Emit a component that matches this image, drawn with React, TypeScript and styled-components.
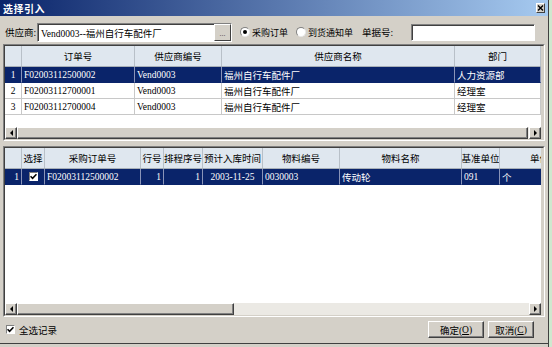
import React from 'react';
import styled, { createGlobalStyle } from 'styled-components';

const GlobalStyle = createGlobalStyle`
  html, body {
    margin: 0;
    padding: 0;
  }
  body {
    background: #cfe8cf;
    font-family: "Liberation Serif", "Noto Sans CJK SC", serif;
    font-size: 9.5px;
    color: #000;
  }
`;

const Window = styled.div`
  width: 549px;
  height: 347px;
  box-sizing: border-box;
  background: #d4d0c8;
  border-right: 1px solid #404040;
  display: flex;
  flex-direction: column;
`;

const TitleBar = styled.div`
  height: 16px;
  flex: none;
  background: linear-gradient(to right, #0a246a, #a6caf0);
  display: flex;
  align-items: center;
  justify-content: space-between;
  padding: 0 3px 0 3px;
`;

const Title = styled.span`
  color: #fff;
  font-weight: bold;
  font-size: 10px;
  font-family: "Noto Sans CJK SC", sans-serif;
  letter-spacing: 0.5px;
`;

const CloseButton = styled.div`
  width: 9px;
  height: 10px;
  box-sizing: border-box;
  background: #d4d0c8;
  border: 1px solid;
  border-color: #fff #404040 #404040 #fff;
  display: flex;
  align-items: center;
  justify-content: center;
`;

const Toolbar = styled.div`
  height: 28px;
  flex: none;
  box-sizing: border-box;
  padding: 4px 0 0 5px;
  display: flex;
  align-items: center;
`;

const Label = styled.span<{ $width: number }>`
  width: ${p => p.$width}px;
  flex: none;
  white-space: nowrap;
`;

const Sunken = styled.div<{ $width: number; $height: number }>`
  width: ${p => p.$width}px;
  height: ${p => p.$height}px;
  flex: none;
  box-sizing: border-box;
  background: #fff;
  border: 1px solid;
  border-color: #808080 #fff #fff #808080;
  display: flex;
  align-items: stretch;
  box-shadow: inset 1px 1px 0 #404040;
`;

const InputText = styled.span`
  flex: 1;
  padding: 2px 0 0 3px;
  white-space: nowrap;
  overflow: hidden;
`;

const EllipsisButton = styled.div`
  width: 17px;
  flex: none;
  box-sizing: border-box;
  background: #d4d0c8;
  border: 1px solid;
  border-color: #fff #404040 #404040 #fff;
  display: flex;
  align-items: flex-end;
  justify-content: center;
  padding-bottom: 2px;
  font-size: 8px;
  color: #404040;
  line-height: 1;
`;

const RadioOption = styled.label<{ $offset: number; $width: number }>`
  margin-left: ${p => p.$offset}px;
  width: ${p => p.$width}px;
  flex: none;
  display: flex;
  align-items: center;
  gap: 2px;
  white-space: nowrap;
  font-size: 9px;
`;

const Radio = styled.span<{ $checked?: boolean }>`
  width: 10px;
  height: 10px;
  flex: none;
  box-sizing: border-box;
  border-radius: 50%;
  background: #fff;
  border: 1px solid;
  border-color: #808080 #e8e8e8 #e8e8e8 #808080;
  display: inline-flex;
  align-items: center;
  justify-content: center;

  &::after {
    content: '';
    width: 4px;
    height: 4px;
    border-radius: 50%;
    background: ${p => (p.$checked ? '#000' : 'transparent')};
  }
`;

const DocLabel = styled.span`
  width: 49px;
  flex: none;
  white-space: nowrap;
`;

const GridPanel = styled.div<{ $height: number }>`
  height: ${p => p.$height}px;
  flex: none;
  margin: 0 3px;
  box-sizing: border-box;
  border: 1px solid;
  border-color: #808080 #fff #fff #808080;
  display: flex;
`;

const GridInner = styled.div`
  flex: 1;
  border: 1px solid;
  border-color: #404040 #d4d0c8 #d4d0c8 #404040;
  background: #d4d0c8;
  display: flex;
  flex-direction: column;
  min-height: 0;
`;

const GridBody = styled.div`
  width: 536px;
  flex: 1;
  background: #fff;
  overflow: hidden;
  display: flex;
  flex-direction: column;
`;

const HeaderRow = styled.div`
  height: 21px;
  flex: none;
  display: flex;
  background: #dfe7ef;
  border-bottom: 1px solid #a8b0b8;
  box-sizing: border-box;
`;

const HeaderCell = styled.div<{ $width: number }>`
  width: ${p => p.$width}px;
  flex: none;
  box-sizing: border-box;
  border-right: 1px solid #b8c0c8;
  display: flex;
  align-items: center;
  justify-content: center;
  white-space: nowrap;
  overflow: hidden;
`;

const Row = styled.div<{ $selected?: boolean }>`
  height: 16px;
  flex: none;
  display: flex;
  background: ${p => (p.$selected ? '#0a246a' : '#fff')};
  color: ${p => (p.$selected ? '#fff' : '#000')};
`;

const Cell = styled.div<{ $width: number; $align: string; $selected?: boolean }>`
  width: ${p => p.$width}px;
  flex: none;
  box-sizing: border-box;
  border-right: 1px solid ${p => (p.$selected ? '#8a94b8' : '#c8c8c8')};
  border-bottom: 1px solid ${p => (p.$selected ? '#0a246a' : '#c8c8c8')};
  padding: 0 2px;
  display: flex;
  align-items: center;
  justify-content: ${p => p.$align};
  white-space: nowrap;
  overflow: hidden;
`;

const CheckBox = styled.span`
  width: 9px;
  height: 9px;
  flex: none;
  box-sizing: border-box;
  background: #fff;
  border: 1px solid;
  border-color: #808080 #fff #fff #808080;
  display: inline-flex;
  align-items: center;
  justify-content: center;
`;

const ScrollBar = styled.div`
  width: 536px;
  height: 12px;
  flex: none;
  display: flex;
  background: #ebe9e4;
`;

const ScrollPart = styled.div<{ $width: number }>`
  width: ${p => p.$width}px;
  flex: none;
  box-sizing: border-box;
  background: #d4d0c8;
  border: 1px solid;
  border-color: #fff #404040 #404040 #fff;
  box-shadow: inset -1px -1px 0 #808080;
  display: flex;
  align-items: center;
  justify-content: center;
`;

const Track = styled.div`
  flex: 1;
`;

const Arrow = styled.span<{ $dir: 'left' | 'right' }>`
  width: 0;
  height: 0;
  border-top: 3px solid transparent;
  border-bottom: 3px solid transparent;
  ${p => (p.$dir === 'left' ? 'border-right: 3px solid #000;' : 'border-left: 3px solid #000;')}
`;

const Gap = styled.div`
  height: 5px;
  flex: none;
`;

const Footer = styled.div`
  height: 27px;
  flex: none;
  box-sizing: border-box;
  border-bottom: 1px solid #404040;
  padding: 0 14px 1px 6px;
  display: flex;
  align-items: center;
  justify-content: space-between;
`;

const SelectAll = styled.label`
  display: flex;
  align-items: center;
  gap: 4px;
`;

const Buttons = styled.div`
  display: flex;
  gap: 4px;
`;

const Button = styled.div<{ $width: number }>`
  width: ${p => p.$width}px;
  height: 17px;
  box-sizing: border-box;
  background: #d4d0c8;
  border: 1px solid;
  border-color: #fff #404040 #404040 #fff;
  box-shadow: inset -1px -1px 0 #808080;
  display: flex;
  align-items: center;
  justify-content: center;
  white-space: nowrap;
`;

type Column = { title: string; width: number; align?: string };

const topColumns: Column[] = [
  { title: '', width: 17, align: 'center' },
  { title: '订单号', width: 113, align: 'flex-start' },
  { title: '供应商编号', width: 87, align: 'flex-start' },
  { title: '供应商名称', width: 233, align: 'flex-start' },
  { title: '部门', width: 86, align: 'flex-start' },
];

const bottomColumns: Column[] = [
  { title: '', width: 17, align: 'flex-end' },
  { title: '选择', width: 23, align: 'center' },
  { title: '采购订单号', width: 96, align: 'flex-start' },
  { title: '行号', width: 23, align: 'flex-end' },
  { title: '排程序号', width: 39, align: 'flex-end' },
  { title: '预计入库时间', width: 60, align: 'center' },
  { title: '物料编号', width: 77, align: 'flex-start' },
  { title: '物料名称', width: 122, align: 'flex-start' },
  { title: '基准单位', width: 38, align: 'flex-start' },
  { title: '单价', width: 80, align: 'flex-start' },
];

const Check = () => (
  <svg width="7" height="7" viewBox="0 0 7 7">
    <path d="M0.5 3.2 L2.6 5.4 L6.5 1.2" fill="none" stroke="#000" strokeWidth="1.6" />
  </svg>
);

const topRows: React.ReactNode[][] = [
  ['1', 'F02003112500002', 'Vend0003', '福州自行车配件厂', '人力资源部'],
  ['2', 'F02003112700001', 'Vend0003', '福州自行车配件厂', '经理室'],
  ['3', 'F02003112700004', 'Vend0003', '福州自行车配件厂', '经理室'],
];

const bottomRows: React.ReactNode[][] = [
  [
    '1',
    <CheckBox key="c">
      <Check />
    </CheckBox>,
    'F02003112500002',
    '1',
    '1',
    '2003-11-25',
    '0030003',
    '传动轮',
    '091',
    '个',
  ],
];

type GridProps = {
  columns: Column[];
  rows: React.ReactNode[][];
  height: number;
  thumb: number;
};

const DataGrid = ({ columns, rows, height, thumb }: GridProps) => (
  <GridPanel $height={height}>
    <GridInner>
      <GridBody>
        <HeaderRow>
          {columns.map((c, i) => (
            <HeaderCell key={i} $width={c.width}>
              {c.title}
            </HeaderCell>
          ))}
        </HeaderRow>
        {rows.map((r, i) => (
          <Row key={i} $selected={i === 0}>
            {r.map((v, j) => (
              <Cell key={j} $width={columns[j].width} $align={columns[j].align || 'flex-start'} $selected={i === 0}>
                {v}
              </Cell>
            ))}
          </Row>
        ))}
      </GridBody>
      <ScrollBar>
        <ScrollPart $width={12}>
          <Arrow $dir="left" />
        </ScrollPart>
        <ScrollPart $width={thumb} />
        <Track />
        <ScrollPart $width={12}>
          <Arrow $dir="right" />
        </ScrollPart>
      </ScrollBar>
    </GridInner>
  </GridPanel>
);

const App = () => (
  <>
    <GlobalStyle />
    <Window>
      <TitleBar>
        <Title>选择引入</Title>
        <CloseButton>
          <svg width="7" height="6" viewBox="0 0 7 6">
            <path d="M1 0.5 L6 5.5 M6 0.5 L1 5.5" stroke="#000" strokeWidth="1.4" />
          </svg>
        </CloseButton>
      </TitleBar>

      <Toolbar>
        <Label $width={32}>供应商:</Label>
        <Sunken $width={195} $height={19}>
          <InputText>Vend0003--福州自行车配件厂</InputText>
          <EllipsisButton>...</EllipsisButton>
        </Sunken>
        <RadioOption $offset={8} $width={56}>
          <Radio $checked />
          采购订单
        </RadioOption>
        <RadioOption $offset={0} $width={66}>
          <Radio />
          到货通知单
        </RadioOption>
        <DocLabel>单据号:</DocLabel>
        <Sunken $width={124} $height={17} />
      </Toolbar>

      <DataGrid columns={topColumns} rows={topRows} height={97} thumb={511} />
      <Gap />
      <DataGrid columns={bottomColumns} rows={bottomRows} height={171} thumb={217} />

      <Footer>
        <SelectAll>
          <CheckBox>
            <Check />
          </CheckBox>
          全选记录
        </SelectAll>
        <Buttons>
          <Button $width={56}>
            确定(<u>O</u>)
          </Button>
          <Button $width={46}>
            取消(<u>C</u>)
          </Button>
        </Buttons>
      </Footer>
    </Window>
  </>
);

export default App;
